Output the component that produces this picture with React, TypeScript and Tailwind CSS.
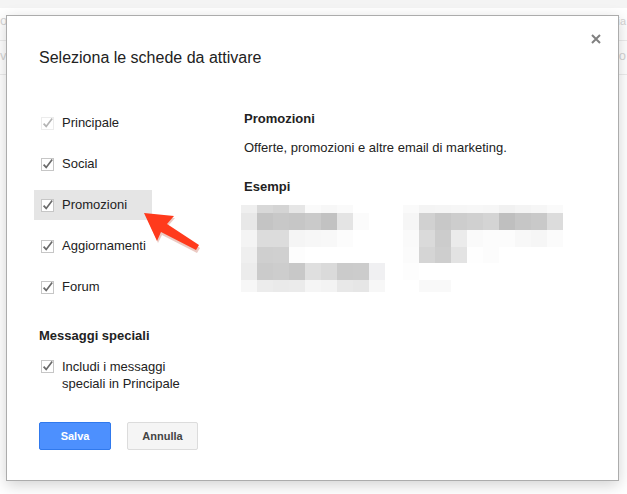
import React from 'react'

const W = 'fff'

// pixelated preview, one hex per 16px cell
const LEFT_BLOCK: string[][] = [
  ['efefef', 'd8d8d8', 'd4d4d4', 'e6e6e6', 'fafafa', 'f7f7f7', 'fafafa', W, W, W],
  ['e8e8e8', 'c4c4c4', 'c8c8c8', 'c6c6c6', 'cacaca', 'c2c2c2', 'e4e4e4', 'fbfbfb', W, W],
  ['f4f4f4', 'dcdcdc', 'dcdcdc', 'f5f5f5', 'f7f7f7', 'f8f8f8', 'fcfcfc', W, W, W],
  ['efefef', 'cfcfcf', 'd0d0d0', 'fdfdfd', W, W, W, W, W, W],
  ['ececec', 'cbcbcb', 'cdcdcd', 'c8c8c8', 'dfdfdf', 'dadada', 'cbcbcb', 'cccccc', 'f0f0f2', W],
  ['f7f7f7', 'ececec', 'eaeaea', 'ebebeb', 'f5f5f5', 'f3f3f3', 'e8e8e8', 'e6e6e6', 'f7f7f7', W],
]

const RIGHT_BLOCK: string[][] = [
  ['fafafa', 'f4f4f4', 'f5f5f5', 'f6f6f6', 'f7f7f7', 'f6f6f6', 'f1f1f1', 'f4f4f4', 'f6f6f6', 'fafafa'],
  ['f6f6f6', 'd1d1d1', 'c8c8c8', 'cdcdcd', 'd0d0d0', 'd4d4d4', 'bfbfbf', 'c6c6c6', 'c9c9c9', 'dcdcdc'],
  ['fafafa', 'dadada', 'cccccc', 'ebebeb', 'fafafa', 'fcfcfc', 'fcfcfc', 'f8f8f8', 'f6f6f6', 'fbfbfb'],
  ['fbfbfb', 'd5d5d5', 'cecece', 'e3e3e3', 'fefefe', 'fcfcfc', W, W, W, W],
  ['fdfdfd', W, W, W, W, W, W, W, W, W],
  [W, 'f9f9f9', 'f9f9f9', W, W, W, W, W, W, W],
]

const ROW_Y = [0, 8, 25, 42, 58, 75, 87]

const tabs = [
  { label: 'Principale', disabled: true },
  { label: 'Social' },
  { label: 'Promozioni', active: true },
  { label: 'Aggiornamenti' },
  { label: 'Forum' },
]

function Check({ disabled }: { disabled?: boolean }) {
  return (
    <svg width="13" height="13" viewBox="0 0 13 13" className="shrink-0 block">
      <rect
        x="0.5"
        y="0.5"
        width="12"
        height="12"
        fill="#fff"
        stroke={disabled ? '#ececec' : '#c6c6c6'}
      />
      <path
        d="M2.6 6.6 L5.2 9.4 L11.2 1.6"
        fill="none"
        stroke={disabled ? '#b4b4b4' : '#6a6a6a'}
        strokeWidth="1.7"
      />
    </svg>
  )
}

function Pixels() {
  const cells = (grid: string[][], ox: number) =>
    grid.flatMap((row, r) =>
      row.map((c, i) => (
        <rect
          key={`${ox}-${r}-${i}`}
          x={ox + i * 16}
          y={ROW_Y[r]}
          width="16"
          height={ROW_Y[r + 1] - ROW_Y[r]}
          fill={'#' + c}
        />
      ))
    )
  return (
    <svg width="322" height="87" viewBox="0 0 322 87" className="block ml-[-3px]">
      {cells(LEFT_BLOCK, 0)}
      {cells(RIGHT_BLOCK, 162)}
    </svg>
  )
}

export default function App() {
  return (
    <div className="relative w-[627px] h-[494px] overflow-hidden bg-white font-['Liberation_Sans',Arial,sans-serif] text-[13px] text-[#222]">
      {/* page underneath the dialog */}
      <div className="flex flex-col text-[#d4d4d4]">
        <div className="h-[8px] bg-[#f4f4f4]" />
        <div className="h-[33px] flex items-center justify-between border-b border-[#ececec] pb-[6px]">
          <span>ol</span>
          <span className="text-[11px] mr-[1px]">zia</span>
        </div>
        <div className="h-[34px] flex items-center justify-between border-b border-[#ececec] pb-[3px]">
          <span>v</span>
          <span className="mr-[1px]">o</span>
        </div>
      </div>

      {/* dialog */}
      <div className="absolute left-[6px] top-[15px] w-[613px] h-[466px] bg-white border border-[#acacac] shadow-[0_4px_14px_rgba(0,0,0,0.18)]">
        <button className="absolute right-[17px] top-[18px] w-[10px] h-[10px]">
          <svg width="10" height="10" viewBox="0 0 10 10" className="block">
            <path d="M1 1 L9 9 M9 1 L1 9" stroke="#808080" strokeWidth="2" />
          </svg>
        </button>

        <h1 className="pl-[32px] pt-[32px] text-[16px] leading-[20px] text-[#222]">
          Seleziona le schede da attivare
        </h1>

        <div className="flex mt-[39px] pl-[27px]">
          {/* left column */}
          <div className="w-[210px] flex flex-col">
            <div className="flex flex-col gap-[11px] mt-[1px]">
              {tabs.map(t => (
                <div
                  key={t.label}
                  className={
                    'w-[118px] h-[30px] flex items-center gap-[8px] px-[7px] ' +
                    (t.active ? 'bg-[#e5e5e5]' : '')
                  }
                >
                  <Check disabled={t.disabled} />
                  <span className="leading-[16px]">{t.label}</span>
                </div>
              ))}
            </div>

            <h2 className="ml-[5px] mt-[26px] font-bold leading-[16px]">Messaggi speciali</h2>

            <div className="flex items-start gap-[8px] ml-[7px] mt-[14px]">
              <div className="mt-[2px]">
                <Check />
              </div>
              <span className="leading-[17px]">
                Includi i messaggi
                <br />
                speciali in Principale
              </span>
            </div>

            <div className="flex gap-[16px] ml-[5px] mt-[30px]">
              <button className="w-[72px] h-[28px] rounded-[2px] border border-[#3079ed] bg-[#4d90fe] text-white text-[11px] font-bold">
                Salva
              </button>
              <button className="w-[71px] h-[28px] rounded-[2px] border border-[#dcdcdc] bg-[#f5f5f5] text-[#444] text-[11px] font-bold">
                Annulla
              </button>
            </div>
          </div>

          {/* right column: preview */}
          <div className="flex flex-col pt-[4px]">
            <h3 className="font-bold leading-[16px]">Promozioni</h3>
            <p className="mt-[13px] leading-[16px]">Offerte, promozioni e altre email di marketing.</p>
            <h3 className="mt-[23px] font-bold leading-[16px]">Esempi</h3>
            <div className="mt-[10px]">
              <Pixels />
            </div>
          </div>
        </div>
      </div>

      {/* red annotation arrow */}
      <svg
        width="627"
        height="494"
        viewBox="0 0 627 494"
        className="absolute inset-0 pointer-events-none"
      >
        <polygon
          points="145,214 174,216 167,224 199,246 196,251 161,233 157,241"
          fill="#b02a10"
          opacity="0.25"
          transform="translate(1,2)"
        />
        <polygon
          points="144,213 174,216 167,224 199,245 196,250 161,232 157,241"
          fill="#ff3a1c"
        />
      </svg>
    </div>
  )
}
